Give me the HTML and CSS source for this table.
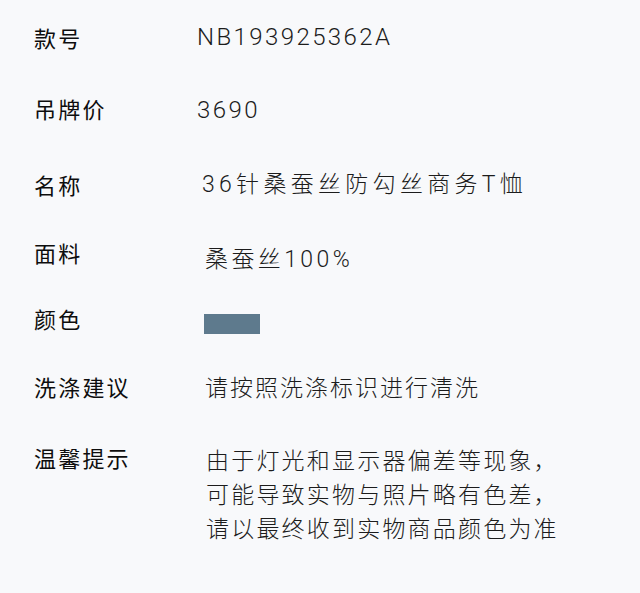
FILE: index.html
```html
<!DOCTYPE html>
<html lang="zh">
<head>
<meta charset="utf-8">
<link rel="stylesheet" href="styles.css">
</head>
<body>
<div class="spec">
  <div class="row r1"><div class="label">款号</div><div class="value v-latin">NB193925362A</div></div>
  <div class="row r2"><div class="label">吊牌价</div><div class="value v-latin">3690</div></div>
  <div class="row r3"><div class="label">名称</div><div class="value v-name">36针桑蚕丝防勾丝商务T恤</div></div>
  <div class="row r4"><div class="label">面料</div><div class="value v-fabric">桑蚕丝100%</div></div>
  <div class="row r5"><div class="label">颜色</div><div class="value v-color"><span class="swatch"></span></div></div>
  <div class="row r6"><div class="label">洗涤建议</div><div class="value v-wash">请按照洗涤标识进行清洗</div></div>
  <div class="row r7"><div class="label">温馨提示</div><div class="value v-tip">由于灯光和显示器偏差等现象，<br>可能导致实物与照片略有色差，<br>请以最终收到实物商品颜色为准</div></div>
</div>
</body>
</html>
```
FILE: styles.css
```css
html, body {
  margin: 0;
  padding: 0;
  background: #f8f9fb;
}
body {
  width: 640px;
  height: 593px;
  overflow: hidden;
  font-family: "Noto Sans CJK SC", "Noto Sans", sans-serif;
}
.spec {
  padding: 20px 0 0 34px;
}
.row {
  display: flex;
  align-items: flex-start;
}
.label {
  width: 163px;
  flex: none;
  font-size: 22px;
  line-height: 34px;
  font-weight: 400;
  color: #0d0d0d;
  letter-spacing: 2.2px;
}
.value {
  font-family: "Roboto", "Noto Sans CJK SC", sans-serif;
  font-size: 23px;
  line-height: 34px;
  font-weight: 300;
  color: #1c1c1c;
  letter-spacing: 2px;
}
.v-latin { font-size: 24px; letter-spacing: 2.4px; }
.v-name { letter-spacing: 4.3px; }
.v-fabric { letter-spacing: 3.4px; }
.v-tip { letter-spacing: 2.2px; }
.r2 { margin-top: 37px; }
.r2 .value { margin-top: 2px; margin-bottom: -2px; }
.r3 { margin-top: 42px; }
.r3 .value { padding-left: 5px; margin-top: 1px; margin-bottom: -1px; }
.r4 { margin-top: 34px; }
.r4 .value { padding-left: 8px; margin-top: 8px; margin-bottom: -8px; }
.r5 { margin-top: 32px; }
.r5 .value { padding-left: 7px; padding-top: 13px; margin-bottom: -13px; }
.swatch {
  display: block;
  width: 56px;
  height: 20px;
  background: #5e7a8d;
}
.r6 { margin-top: 34px; }
.r6 .value { padding-left: 8px; margin-top: 3px; margin-bottom: -3px; }
.r7 { margin-top: 37px; }
.r7 .value { padding-left: 9px; margin-top: 5px; }
```
